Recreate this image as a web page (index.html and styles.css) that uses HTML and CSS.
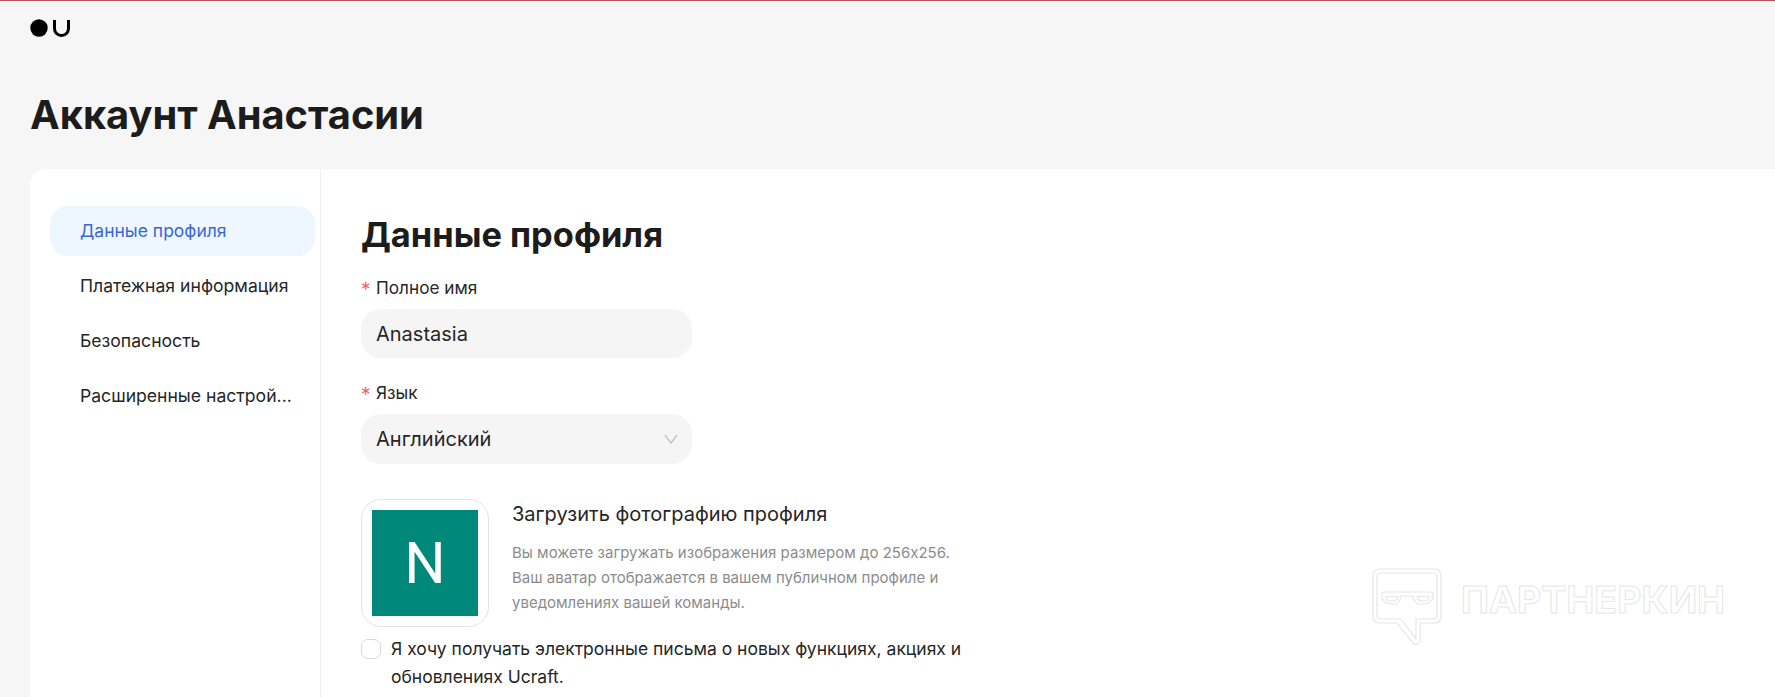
FILE: index.html
```html
<!DOCTYPE html>
<html lang="ru">
<head>
    <meta charset="UTF-8">
    <meta name="viewport" content="width=device-width, initial-scale=1.0">
    <title>Аккаунт Анастасии</title>
    <link rel="stylesheet" href="styles.css">
</head>
<body>
    <header class="topbar">
        <svg class="logo" width="40" height="18" viewBox="0 0 40 18">
            <circle cx="9" cy="9" r="8.7" fill="#000"/>
            <path d="M24.5 1V9.5a7 7 0 0 0 14 0V1" fill="none" stroke="#000" stroke-width="3"/>
        </svg>
    </header>

    <h1 class="page-title">Аккаунт Анастасии</h1>

    <div class="card">
        <nav class="sidebar">
            <a class="nav-item active">Данные профиля</a>
            <a class="nav-item">Платежная информация</a>
            <a class="nav-item">Безопасность</a>
            <a class="nav-item">Расширенные настрой...</a>
        </nav>

        <main class="content">
            <h2>Данные профиля</h2>

            <label class="field-label"><span class="req">*</span>Полное имя</label>
            <div class="input">Anastasia</div>

            <label class="field-label second"><span class="req">*</span>Язык</label>
            <div class="input select">
                Английский
                <svg width="14" height="10" viewBox="0 0 14 10">
                    <path d="M1 1l6 8 6-8" fill="none" stroke="#b5b5b5" stroke-width="1.2"/>
                </svg>
            </div>

            <div class="upload">
                <div class="avatar-box">
                    <div class="avatar">N</div>
                </div>
                <div class="upload-text">
                    <div class="upload-title">Загрузить фотографию профиля</div>
                    <p>Вы можете загружать изображения размером до 256x256.<br>Ваш аватар отображается в вашем публичном профиле и<br>уведомлениях вашей команды.</p>
                </div>
            </div>

            <div class="checkbox-row">
                <span class="checkbox"></span>
                <span class="checkbox-text">Я хочу получать электронные письма о новых функциях, акциях и обновлениях Ucraft.</span>
            </div>
        </main>
    </div>

    <div class="watermark">
        <svg width="70" height="77" viewBox="0 0 70 77" fill="none" stroke="#e6e6e6" stroke-width="1.2">
            <path d="M7 1H63a6 6 0 0 1 6 6V49a6 6 0 0 1-6 6H48V72a4 4 0 0 1-7 3L25 55H7a6 6 0 0 1-6-6V7a6 6 0 0 1 6-6z"/>
            <path d="M9 5H61a4 4 0 0 1 4 4V47a4 4 0 0 1-4 4H44V71L29 51H9a4 4 0 0 1-4-4V9a4 4 0 0 1 4-4z"/>
            <path d="M12 24H59a2 2 0 0 1 2 2V29c0 4-5 7-10 7h-4c-3 0-5-3-6-8H29c-1 5-3 8-6 8h-3c-6 0-10-3-10-7V26a2 2 0 0 1 2-2z"/>
            <path d="M14 28.5H26c-1 3-2 4.5-4 4.5h-3c-3 0-5-2-5-4.5zM45 28.5H57c0 2.5-2 4.5-5 4.5h-3c-2 0-3-1.5-4-4.5z"/>
        </svg>
        <span class="watermark-text">ПАРТНЕРКИН</span>
    </div>
</body>
</html>
```

FILE: styles.css
```css
* {
    box-sizing: border-box;
}
html, body {
    height: 100%;
}
body {
    margin: 0;
    overflow: hidden;
    font-family: Inter, "Noto Sans", sans-serif;
    background: #f6f6f6;
    color: #262626;
    border-top: 1px solid #bc5054;
}
.topbar {
    height: 60px;
    padding: 18px 0 0 30px;
}
.logo {
    display: block;
}
.page-title {
    margin: 0;
    padding: 30px 0 30px 30px;
    font-size: 39.8px;
    line-height: 48px;
    font-weight: 700;
    color: #1c1c1c;
}
.card {
    display: flex;
    margin-left: 30px;
    height: 528px;
    background: #fff;
    border-radius: 16px 0 0 0;
}
.sidebar {
    width: 291px;
    flex: none;
    padding: 37px 5px 0 20px;
    border-right: 1px solid #f0f0f0;
}
.nav-item {
    display: block;
    height: 50px;
    margin-bottom: 5px;
    padding-left: 30px;
    font-size: 17.6px;
    line-height: 50px;
    border-radius: 18px;
    white-space: nowrap;
}
.nav-item.active {
    background: #eef6ff;
    color: #3b66d6;
    font-size: 17.5px;
}
.content {
    flex: 1;
    padding: 44px 0 0 40px;
}
h2 {
    margin: 0 0 17px;
    font-size: 34.4px;
    line-height: 44px;
    font-weight: 700;
    color: #1c1c1c;
}
.field-label {
    display: block;
    height: 28px;
    margin-bottom: 7px;
    font-size: 17.2px;
    line-height: 28px;
}
.field-label.second {
    margin-top: 21px;
}
.req {
    display: inline-block;
    width: 15px;
    color: #f0616d;
    font-size: 19px;
    line-height: 20px;
    vertical-align: -2px;
}
.input {
    display: flex;
    align-items: center;
    justify-content: space-between;
    width: 331px;
    height: 49px;
    padding: 0 14px 0 15px;
    background: #f5f5f5;
    border-radius: 20px;
    font-size: 20px;
}
.select {
    height: 50px;
}
.upload {
    display: flex;
    margin-top: 35px;
}
.avatar-box {
    flex: none;
    width: 128px;
    height: 128px;
    padding: 10px;
    background: #fff;
    border: 1px solid #e3e3e3;
    border-radius: 20px;
}
.avatar {
    height: 106px;
    background: #00897b;
    color: #fff;
    font-family: Roboto, sans-serif;
    font-size: 58px;
    line-height: 106px;
    text-align: center;
}
.upload-text {
    margin-left: 23px;
}
.upload-title {
    font-size: 20px;
    line-height: 28px;
    margin-top: 1px;
}
.upload-text p {
    margin: 12px 0 0;
    font-size: 15px;
    line-height: 25px;
    color: #8c8c8c;
    white-space: nowrap;
}
.checkbox-row {
    display: flex;
    width: 620px;
    margin-top: 12px;
}
.checkbox {
    flex: none;
    width: 20px;
    height: 20px;
    margin: 0 10px 0 0;
    background: #fff;
    border: 1px solid #d9d9d9;
    border-radius: 7px;
}
.checkbox-text {
    margin-top: -4px;
    font-size: 17.5px;
    line-height: 28px;
}
.watermark {
    position: absolute;
    left: 1372px;
    top: 568px;
    display: flex;
    gap: 19px;
}
.watermark-text {
    margin-top: 10px;
    font-size: 37.5px;
    line-height: 44px;
    font-weight: 700;
    color: transparent;
    -webkit-text-stroke: 1px #e6e6e6;
}
```
